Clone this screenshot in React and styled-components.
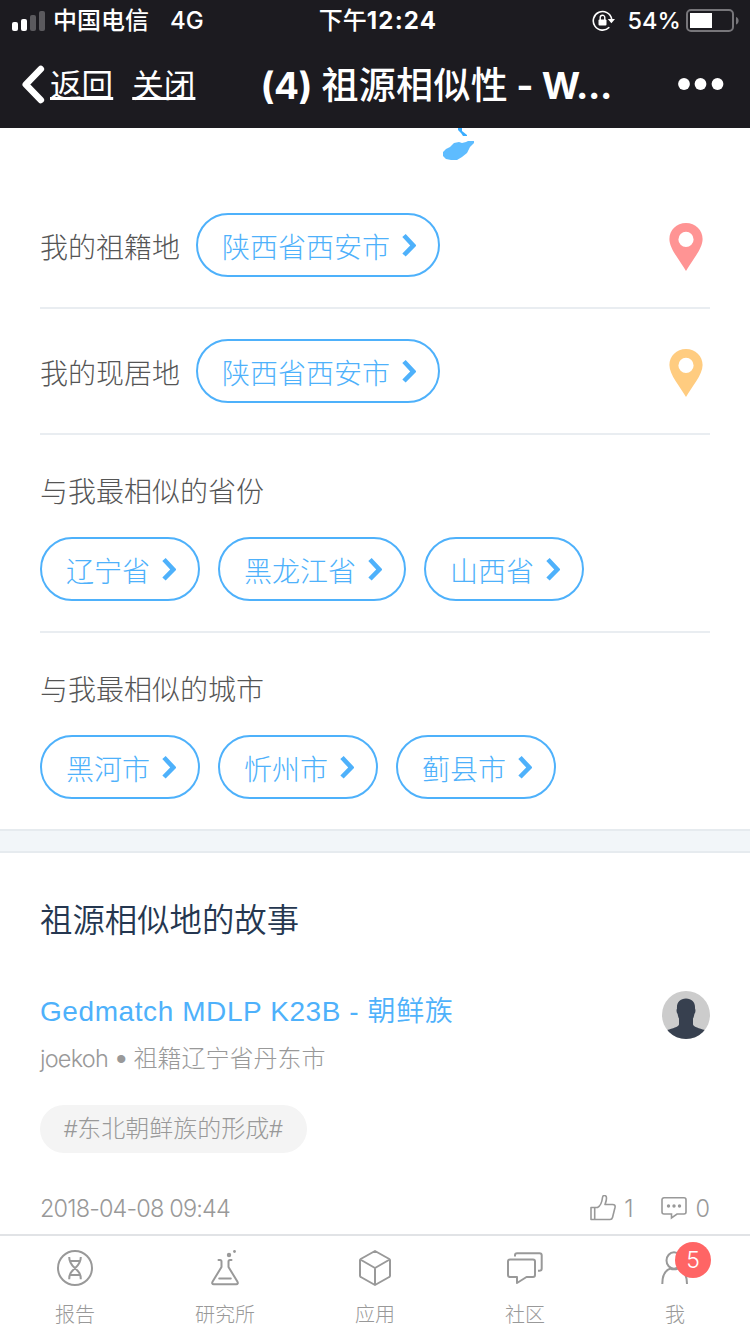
import React from "react"
import styled, { createGlobalStyle } from "styled-components"

const GlobalStyle = createGlobalStyle`
  * {
    box-sizing: border-box;
  }
  body {
    margin: 0;
    background: #fff;
    font-family: "Liberation Sans", "Noto Sans CJK SC", sans-serif;
    font-weight: 300;
  }
`

const Page = styled.div`
  width: 750px;
  height: 1334px;
  display: flex;
  flex-direction: column;
  overflow: hidden;
`

const Header = styled.header`
  flex: none;
  height: 128px;
  background: #1c1b20;
  color: #fff;
  font-family: Inter, "Noto Sans CJK SC", sans-serif;
  font-weight: 500;
`

const StatusBar = styled.div`
  height: 40px;
  padding: 0 11px 0 12px;
  display: grid;
  grid-template-columns: 1fr auto 1fr;
  align-items: center;
  font-size: 24px;
  line-height: 40px;
  white-space: nowrap;
  > div > span, > span {
    padding-top: 1px;
  }
`

const StatusLeft = styled.div`
  display: flex;
  align-items: center;
`

const StatusRight = styled.div`
  display: flex;
  align-items: center;
  justify-content: flex-end;
`

const Carrier = styled.span`
  margin: 0 22px 0 7px;
`

const Network = styled.span`
  margin-left: -1px;
`

const Clock = styled.span`
  margin-left: 5px;
  > b {
    font-weight: 700;
    letter-spacing: 1.2px;
  }
`

const Battery = styled.span`
  margin: 0 5px 0 11px;
  font-size: 23.5px;
  letter-spacing: 0.1px;
`

const NavBar = styled.nav`
  height: 88px;
  padding: 0 26px 0 21px;
  display: flex;
  align-items: center;
`

const NavLink = styled.a`
  margin-right: ${props => props.$gap}px;
  padding-top: 3px;
  font-size: 31.6px;
  line-height: 40px;
  font-weight: 400;
  text-decoration: underline;
  text-decoration-thickness: 3px;
  text-underline-offset: 0;
  text-decoration-skip-ink: none;
`

const NavTitle = styled.h1`
  flex-grow: 1;
  margin: 0;
  padding-top: 3px;
  font-size: 37px;
  line-height: 50px;
  font-weight: 700;
  letter-spacing: -0.4px;
  white-space: pre;
  > span {
    margin-left: 1px;
    font-weight: 500;
    letter-spacing: 0.3px;
  }
`

const Content = styled.main`
  flex: 1;
  min-height: 0;
  overflow: hidden;
`

const MapTail = styled.div`
  height: 55px;
  padding-left: 442px;
  > svg {
    display: block;
  }
`

const PlaceRow = styled.div`
  height: 126px;
  margin: 0 40px;
  padding-right: 7px;
  display: flex;
  align-items: center;
  border-bottom: 2px solid #e9edf1;
  > svg {
    margin-top: 3px;
  }
`

const Label = styled.span`
  margin-right: 16px;
  padding-top: 2px;
  font-size: 28px;
  color: #555;
`

const Spacer = styled.div`
  flex: 1;
`

const PillButton = styled.button`
  height: 64px;
  padding: 0 22px 0 24px;
  display: flex;
  align-items: center;
  gap: 12px;
  border: 2px solid #4eb1fb;
  border-radius: 32px;
  background: #fff;
  color: #4eb1fb;
  font: inherit;
  font-size: 28px;
  line-height: 40px;
  > span {
    padding-top: 7px;
  }
`

const Group = styled.section`
  height: ${props => (props.$last ? 196 : 198)}px;
  margin: 0 40px;
  padding-top: 32px;
  border-bottom: ${props => (props.$last ? "none" : "2px solid #e9edf1")};
`

const GroupTitle = styled.h3`
  margin: 0 0 18px;
  font-size: 28px;
  line-height: 52px;
  font-weight: 300;
  color: #555;
`

const Pills = styled.div`
  display: flex;
  gap: 18px;
`

const Band = styled.div`
  height: 24px;
  background: #f2f6f9;
  border: solid #e6ebef;
  border-width: 2px 0;
`

const Stories = styled.section`
  padding: 41px 40px 0;
`

const StoriesTitle = styled.h2`
  margin: 0;
  height: 95px;
  font-size: 32.4px;
  line-height: 54px;
  font-weight: 350;
  color: #253750;
`

const StoryHead = styled.div`
  display: flex;
  justify-content: space-between;
`

const StoryTitle = styled.div`
  padding-top: 1px;
  font-size: 28px;
  line-height: 44px;
  font-weight: 350;
  letter-spacing: 0.58px;
  color: #4eb1fb;
`

const StoryMeta = styled.div`
  margin-top: 3px;
  display: flex;
  align-items: center;
  font-size: 24px;
  line-height: 44px;
  color: #999;
`

const Dot = styled.span`
  margin: 0 7px 0 8px;
  font-size: 30px;
`

const Light = styled.span`
  font-family: Inter, sans-serif;
  font-weight: 300;
  font-size: 23.5px;
  letter-spacing: ${props => props.$tracking || 0}px;
`

const Avatar = styled.svg`
  margin-top: 2px;
  display: block;
`

const Tag = styled.span`
  height: 48px;
  margin-top: 24px;
  padding: 0 24px;
  display: inline-block;
  border-radius: 24px;
  background: #f4f4f4;
  color: #999;
  font-size: 24px;
  line-height: 48px;
`

const StoryFoot = styled.div`
  margin-top: 32px;
  display: flex;
  align-items: center;
  font-size: 24px;
  line-height: 48px;
  color: #999;
`

const Count = styled.span`
  display: flex;
  align-items: center;
  gap: 8px;
  margin-left: 28px;
`

const TabBar = styled.footer`
  flex: none;
  height: 100px;
  display: grid;
  grid-template-columns: repeat(5, 1fr);
  border-top: 2px solid #e1e3e6;
  background: #fff;
`

const Tab = styled.a`
  position: relative;
  padding-top: 12px;
  display: flex;
  flex-direction: column;
  align-items: center;
  color: #999;
  font-size: 20px;
  line-height: 30px;
  > svg {
    margin-bottom: 12px;
  }
`

const Badge = styled.span`
  position: absolute;
  top: 6px;
  right: 39px;
  width: 36px;
  height: 36px;
  border-radius: 50%;
  background: #ff6565;
  color: #fff;
  font-family: Inter, sans-serif;
  font-size: 23px;
  line-height: 36px;
  text-align: center;
`

const Arrow = () => (
  <svg width="14" height="24" viewBox="0 0 14 24" fill="none" stroke="currentColor" strokeWidth="4.600">
    <path d="M2 2.500L11.300 12.500 2 22" />
  </svg>
)

const Pill = ({ children }) => (
  <PillButton>
    <span>{children}</span>
    <Arrow />
  </PillButton>
)

const Pin = ({ color }) => (
  <svg width="34" height="50" viewBox="0 0 34 50">
    <path
      fill={color}
      fillRule="evenodd"
      d="M17 1C7.500 1 .4 8 .4 17c0 10 11 22 16.600 32C22.600 39 33.600 27 33.600 17 33.600 8 26.500 1 17 1zm0 8.800a7.600 7.600 0 1 1 0 15.200 7.600 7.600 0 0 1 0-15.200z"
    />
  </svg>
)

const Signal = () => (
  <svg width="34" height="22" viewBox="0 0 34 22" fill="#fff">
    <rect x="0" y="12" width="6" height="9" rx="2" />
    <rect x="9" y="9" width="6" height="12" rx="2" />
    <rect x="18" y="5" width="6" height="16" rx="2" opacity=".28" />
    <rect x="27" y="1" width="6" height="20" rx="2" opacity=".28" />
  </svg>
)

const RotationLock = () => (
  <svg width="24" height="22" viewBox="0 0 24 22" fill="none" stroke="#fff">
    <path strokeWidth="1.600" d="M17.300 17.300A9.300 9.300 0 1 1 19.700 9" />
    <path fill="#fff" stroke="none" d="M15.800 9H23l-3.600 4.300z" />
    <rect x="6.500" y="9.500" width="8" height="6" rx="1" fill="#fff" stroke="none" />
    <path strokeWidth="1.400" d="M8.200 10V7.500a2.300 2.300 0 0 1 4.600 0V10" />
  </svg>
)

const BatteryIcon = () => (
  <svg width="53" height="24" viewBox="0 0 53 24">
    <rect x="1" y="1" width="46" height="21" rx="4" fill="none" stroke="#77767a" strokeWidth="2" />
    <rect x="4" y="4" width="22" height="15" fill="#fff" />
    <path d="M50 8c3.500 1 3.500 6.500 0 7.500z" fill="#77767a" />
  </svg>
)

const BackIcon = () => (
  <svg width="29" height="40" viewBox="0 0 29 40" fill="none" stroke="#fff">
    <path strokeWidth="6.600" strokeLinecap="round" strokeLinejoin="round" d="M19.800 5L4.800 20.500 19.800 36" />
  </svg>
)

const MoreIcon = () => (
  <svg width="46" height="12" viewBox="0 0 46 12" fill="#fff">
    <circle cx="6" cy="6" r="5.900" />
    <circle cx="22.500" cy="6" r="5.900" />
    <circle cx="39.500" cy="6" r="5.900" />
  </svg>
)

const ThumbIcon = () => (
  <svg width="26" height="28" viewBox="0 0 26 28" fill="none" stroke="currentColor" strokeWidth="1.600" strokeLinejoin="round">
    <path d="M1 12.500h6.500c3-1.500 4.500-5.500 5-10 .4-3 4-2.500 4 .500 0 2.800-.8 4.500-1.500 6.500h7.500c2.300 0 2.900 1.200 2.500 3L22.500 22.500c-.4 1.600-1 2-2.500 2H1zM4.700 12.500v12" />
  </svg>
)

const CommentIcon = () => (
  <svg width="26" height="26" viewBox="0 0 26 26" fill="none" stroke="currentColor" strokeWidth="1.600">
    <path d="M3 1.800h20a2 2 0 0 1 2 2V16a2 2 0 0 1-2 2h-7l-5.500 4v-4H3a2 2 0 0 1-2-2V3.800a2 2 0 0 1 2-2z" />
    <g fill="currentColor" stroke="none">
      <circle cx="7.500" cy="10" r="1.700" />
      <circle cx="13" cy="10" r="1.700" />
      <circle cx="18.500" cy="10" r="1.700" />
    </g>
  </svg>
)

const TabIcon = ({ children }) => (
  <svg width="38" height="40" viewBox="0 0 38 40" fill="none" stroke="currentColor" strokeWidth="2" strokeLinejoin="round">
    {children}
  </svg>
)

const tabs = [
  {
    name: "报告",
    icon: (
      <TabIcon>
        <circle cx="19" cy="20" r="17" />
        <path d="M13.200 9c0 5 1.500 7.500 5.800 11.300 4.300 3.700 5.800 6 5.800 10.900M24.800 9c0 5-1.500 7.500-5.800 11.300-4.300 3.700-5.800 6-5.800 10.900M14 13h10M14 27h10" />
      </TabIcon>
    ),
  },
  {
    name: "研究所",
    icon: (
      <TabIcon>
        <path strokeLinecap="round" d="M12.500 12H14c1 0 1.500.5 1.500 1.500V19L6.500 33.800c-.7 1.500-.2 2.400 1.200 2.400h22.600c1.400 0 1.900-.9 1.200-2.400L22.500 19v-5.500c0-1 .5-1.500 1.500-1.500h1.500M13.200 30.500h11.600" />
        <circle cx="23" cy="7" r="2.200" fill="currentColor" stroke="none" />
        <circle cx="28.500" cy="3.500" r="1.400" fill="currentColor" stroke="none" />
      </TabIcon>
    ),
  },
  {
    name: "应用",
    icon: (
      <TabIcon>
        <path d="M19 3l14.300 8c.6.400.7.700.7 1.300v15.200c0 .8-.2 1.200-.8 1.500L19 37 4.800 29c-.6-.3-.8-.7-.8-1.500V12.300c0-.6.1-.9.7-1.300zM4.300 11.500L19 20l14.700-8.500M19 20v17" />
      </TabIcon>
    ),
  },
  {
    name: "社区",
    icon: (
      <TabIcon>
        <path d="M4 11.500h23c1.500 0 2 .7 2 2V27c0 1.400-.6 2-2 2h-6.500L11 35v-6H4c-1.400 0-2-.6-2-2V13.500c0-1.300.6-2 2-2z" />
        <path d="M9 8.500V7.200C9 5.800 9.600 5.200 11 5.200h22.500c1.500 0 2.200.6 2.200 2V20.500c0 1.500-.7 2.200-2.200 2.200H32" />
      </TabIcon>
    ),
  },
  {
    name: "我",
    badge: 5,
    icon: (
      <TabIcon>
        <path d="M14.500 20.500C8 22.500 6.300 28 6.300 36M22 20.500c7 2 9 7.500 9 15.500M14 20.500c2.500 1 5.500 1 8 0" />
        <ellipse cx="18" cy="12.500" rx="7.500" ry="8.200" />
      </TabIcon>
    ),
  },
]

const provinces = ["辽宁省", "黑龙江省", "山西省"]
const cities = ["黑河市", "忻州市", "蓟县市"]

const Place = ({ label, city, color }) => (
  <PlaceRow>
    <Label>{label}</Label>
    <Pill>{city}</Pill>
    <Spacer />
    <Pin color={color} />
  </PlaceRow>
)

const Similar = ({ title, items, last }) => (
  <Group $last={last}>
    <GroupTitle>{title}</GroupTitle>
    <Pills>
      {items.map(item => <Pill key={item}>{item}</Pill>)}
    </Pills>
  </Group>
)

const App = () => (
  <Page>
    <GlobalStyle />
    <Header>
      <StatusBar>
        <StatusLeft>
          <Signal />
          <Carrier>中国电信</Carrier>
          <Network>4G</Network>
        </StatusLeft>
        <Clock>下午<b>12:24</b></Clock>
        <StatusRight>
          <RotationLock />
          <Battery>54%</Battery>
          <BatteryIcon />
        </StatusRight>
      </StatusBar>
      <NavBar>
        <BackIcon />
        <NavLink $gap={19}>返回</NavLink>
        <NavLink $gap={65}>关闭</NavLink>
        <NavTitle>(4) <span>祖源相似性</span> - W...</NavTitle>
        <MoreIcon />
      </NavBar>
    </Header>
    <Content>
      <MapTail>
        <svg width="34" height="34" viewBox="0 0 34 34">
          <path fill="#38acff" d="M16 0h4v3l5 4v1h-4l-2-3-3-3z" />
          <path fill="#5ebcff" d="M1 24l3-3 4-2 4-4 5-1 3 1 4-1 2-1h6v2l-4 4-3 6-5 4-5 3H9l-5-1-3-3z" />
        </svg>
      </MapTail>
      <Place label="我的祖籍地" city="陕西省西安市" color="#ff9494" />
      <Place label="我的现居地" city="陕西省西安市" color="#ffcc80" />
      <Similar title="与我最相似的省份" items={provinces} />
      <Similar title="与我最相似的城市" items={cities} last />
      <Band />
      <Stories>
        <StoriesTitle>祖源相似地的故事</StoriesTitle>
        <StoryHead>
          <div>
            <StoryTitle>Gedmatch MDLP K23B - 朝鲜族</StoryTitle>
            <StoryMeta>
              <Light $tracking={-0.8}>joekoh</Light>
              <Dot>•</Dot>
              祖籍辽宁省丹东市
            </StoryMeta>
          </div>
          <Avatar width="48" height="48" viewBox="0 0 48 48">
            <clipPath id="round"><circle cx="24" cy="24" r="24" /></clipPath>
            <g clipPath="url(#round)">
              <path fill="#ccc" d="M0 0h48v48H0z" />
              <path fill="#37404f" d="M24 7.500c6 0 9.500 4 9 10 .800 1.500.600 4-.600 5.500-.3 2-.8 3.500-1.400 4.500v6c1 2.500 6 3.800 12 5.500V48H5v-9c6-1.700 11-3 12-5.500v-6c-.6-1-1.100-2.500-1.400-4.500-1.200-1.500-1.400-4-.6-5.500-.5-6 3-10 9-10z" />
            </g>
          </Avatar>
        </StoryHead>
        <Tag>#东北朝鲜族的形成#</Tag>
        <StoryFoot>
          <Light $tracking={-0.85}>2018-04-08 09:44</Light>
          <Spacer />
          <Count><ThumbIcon /><Light>1</Light></Count>
          <Count><CommentIcon /><Light>0</Light></Count>
        </StoryFoot>
      </Stories>
    </Content>
    <TabBar>
      {tabs.map(tab => (
        <Tab key={tab.name}>
          {tab.icon}
          {tab.name}
          {tab.badge && <Badge>{tab.badge}</Badge>}
        </Tab>
      ))}
    </TabBar>
  </Page>
)

export default App
